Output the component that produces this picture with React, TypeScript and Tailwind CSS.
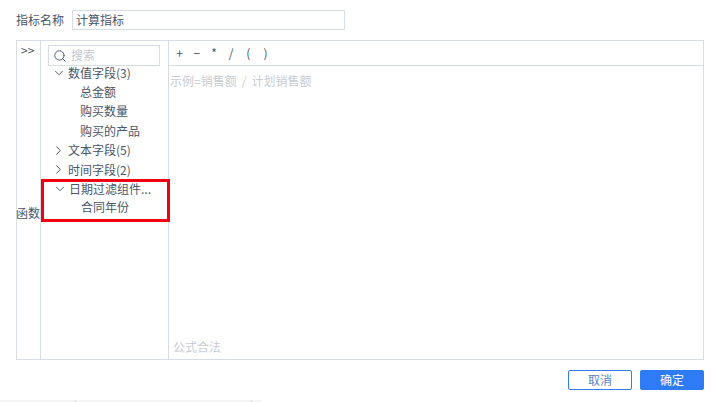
import { ChevronDown, ChevronRight, Search } from 'lucide-react';

const font = { fontFamily: '"Noto Sans CJK SC", "Liberation Sans", sans-serif' };
const operators = ['+', '−', '*', '/', '(', ')'];

function GroupRow({ label, open }: { label: string; open?: boolean }) {
  return (
    <div className="flex h-[19.4px] items-center text-[12px] text-[#4a5669]">
      <span className="flex w-[26px] justify-end pr-[1px] text-[#3d4d66]">
        {open ? (
          <ChevronDown size={14} strokeWidth={1.5} />
        ) : (
          <ChevronRight size={15} strokeWidth={1.5} />
        )}
      </span>
      <span className="ml-[1px] whitespace-nowrap">{label}</span>
    </div>
  );
}

function LeafRow({ label }: { label: string }) {
  return (
    <div className="flex h-[19.4px] items-center pl-[39px] text-[12px] text-[#4a5669]">
      <span className="whitespace-nowrap">{label}</span>
    </div>
  );
}

export default function App() {
  return (
    <div style={font} className="flex h-[402px] w-[721px] flex-col overflow-hidden bg-white">
      {/* Name row */}
      <div className="flex h-[40px] items-start pl-[16px] pt-[10px]">
        <span className="w-[56px] text-[12px] leading-[20px] text-[#4a5669]">指标名称</span>
        <div className="flex h-[20px] w-[273px] items-center border border-[#d8dce3] pl-[3px] text-[12px] text-[#4a5669]">
          计算指标
        </div>
      </div>

      {/* Editor box */}
      <div className="mx-[16px] flex h-[320px] w-[688px] border border-[#d8dce3]">
        <div className="flex w-[24px] shrink-0 flex-col border-r border-[#d8dce3] text-[12px] text-[#4a5669]">
          <div className="pl-[4px] text-[12px] leading-[18px]">&gt;&gt;</div>
          <div className="flex flex-1 items-center whitespace-nowrap pt-[7px]">
            <span className="-ml-[1px]">函数</span>
          </div>
        </div>

        <div className="w-[128px] shrink-0 border-r border-[#d8dce3]">
          <div className="pl-[7px] pt-[4px]">
            <div className="flex h-[21px] w-[112px] items-center border border-[#d8dce3] pl-[4px]">
              <Search size={14} strokeWidth={1.5} className="text-[#3d4d66]" />
              <span className="ml-[4px] -translate-y-[1px] text-[12px] text-[#c4c8d0]">搜索</span>
            </div>
          </div>
          <div className="-mt-[3px]">
            <GroupRow label="数值字段(3)" open />
            <LeafRow label="总金额" />
            <LeafRow label="购买数量" />
            <LeafRow label="购买的产品" />
            <GroupRow label="文本字段(5)" />
            <GroupRow label="时间字段(2)" />
          </div>
          {/* highlight drawn on the screenshot */}
          <div className="-mr-[2px] h-[43px] border-[3px] border-[#f00010]">
            <div className="-ml-[2px] -mt-[3px]">
              <GroupRow label="日期过滤组件..." open />
              <div className="-mt-[1.4px]">
                <LeafRow label="合同年份" />
              </div>
            </div>
          </div>
        </div>

        <div className="flex min-w-0 flex-1 flex-col">
          <div className="flex h-[25px] items-center border-b border-[#d8dce3] pb-[1px] pl-[2px] text-[12px] text-[#4a5669]">
            {operators.map(op => (
              <span key={op} className="w-[17.2px] text-center">
                {op}
              </span>
            ))}
          </div>
          <div className="flex flex-1 flex-col justify-between pb-[3px] pl-[1px] pr-[3px] pt-[6px] text-[12px] text-[#c9ccd3]">
            <span className="whitespace-nowrap">
              示例=销售额<span className="mx-[5px]">/</span>计划销售额
            </span>
            <span className="pl-[3px]">公式合法</span>
          </div>
        </div>
      </div>

      {/* Footer buttons */}
      <div className="flex justify-end gap-[8px] pr-[17px] pt-[10px]">
        <button className="flex h-[20px] w-[64px] items-center justify-center rounded-[2px] border border-[#2f7bf6] text-[12px] text-[#5b84c4]">
          取消
        </button>
        <button className="flex h-[20px] w-[64px] items-center justify-center rounded-[2px] bg-[#2f7bf6] text-[12px] text-white">
          确定
        </button>
      </div>

      {/* Edge of the page behind the dialog */}
      <div className="mt-auto flex h-[2px] w-[262px] bg-[#f4f4f5]">
        <div className="w-[76px] border-r border-[#d8dce3]" />
        <div className="w-[176px] border-r border-[#d8dce3]" />
      </div>
    </div>
  );
}
